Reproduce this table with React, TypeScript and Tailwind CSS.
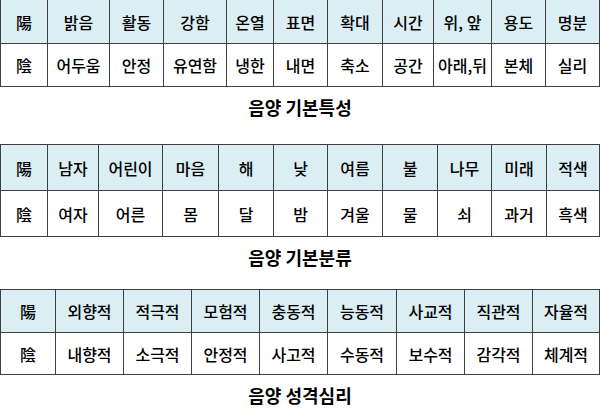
import React from 'react'

type Table = {
  cols: string
  heights: [string, string]
  yang: string[]
  yin: string[]
}

const TABLES: { table: Table; caption: string; captionClass: string }[] = [
  {
    table: {
      cols: 'grid-cols-[46px_61px_53px_62px_46px_53px_54px_50px_57px_53px_53px]',
      heights: ['h-[43px]', 'h-[42px]'],
      yang: ['陽', '밝음', '활동', '강함', '온열', '표면', '확대', '시간', '위, 앞', '용도', '명분'],
      yin: ['陰', '어두움', '안정', '유연함', '냉한', '내면', '축소', '공간', '아래,뒤', '본체', '실리'],
    },
    caption: '음양 기본특성',
    captionClass: 'h-[57px]',
  },
  {
    table: {
      cols: 'grid-cols-[46px_50px_63px_55px_54px_53px_54px_54px_53px_54px_52px]',
      heights: ['h-[45px]', 'h-[45px]'],
      yang: ['陽', '남자', '어린이', '마음', '해', '낮', '여름', '불', '나무', '미래', '적색'],
      yin: ['陰', '여자', '어른', '몸', '달', '밤', '겨울', '물', '쇠', '과거', '흑색'],
    },
    caption: '음양 기본분류',
    captionClass: 'h-[52px]',
  },
  {
    table: {
      cols: 'grid-cols-[54px_67px_67px_67px_67px_68px_67px_67px_66px]',
      heights: ['h-[42px]', 'h-[41px]'],
      yang: ['陽', '외향적', '적극적', '모험적', '충동적', '능동적', '사교적', '직관적', '자율적'],
      yin: ['陰', '내향적', '소극적', '안정적', '사고적', '수동적', '보수적', '감각적', '체계적'],
    },
    caption: '음양 성격심리',
    captionClass: 'h-[42px]',
  },
]

function YinYangTable({ table }: { table: Table }) {
  return (
    <div className={`grid ${table.cols} gap-px bg-[#404040] border border-[#404040]`}>
      {table.yang.map((t, i) => (
        <div
          key={'a' + i}
          className={`${table.heights[0]} bg-[#daeef3] flex items-center justify-center`}
        >
          {t}
        </div>
      ))}
      {table.yin.map((t, i) => (
        <div key={'b' + i} className={`${table.heights[1]} bg-white flex items-center justify-center`}>
          {t}
        </div>
      ))}
    </div>
  )
}

export default function App() {
  return (
    <div
      className="w-[600px] h-[417px] overflow-hidden bg-white text-black text-[16px] font-medium"
      style={{ fontFamily: '"Noto Sans CJK KR", "Noto Sans", sans-serif' }}
    >
      <div className="-mt-px">
        {TABLES.map(({ table, caption, captionClass }, i) => (
          <div key={i}>
            <YinYangTable table={table} />
            <div className={`${captionClass} pt-[8px] text-center text-[18px] leading-[24px] font-bold`}>
              {caption}
            </div>
          </div>
        ))}
      </div>
    </div>
  )
}
